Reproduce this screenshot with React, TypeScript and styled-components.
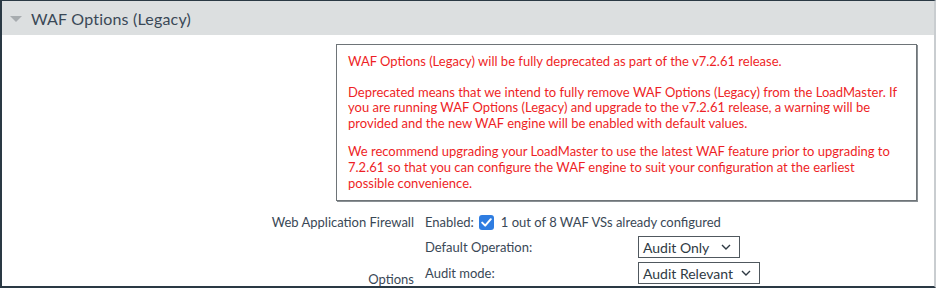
import React from "react";
import styled, { createGlobalStyle } from "styled-components";

const Global = createGlobalStyle`
  html, body { margin: 0; padding: 0; background: #fff; }
  body { font-family: Lato, "Noto Sans", sans-serif; }
`;

const Frame = styled.div`
  box-sizing: border-box;
  width: 936px;
  height: 288px;
  overflow: hidden;
  border-top: 1px solid #2a3944;
  border-left: 2px solid #2a3944;
  border-bottom: 2px solid #2a3944;
  border-right: 2px solid #c9cdd0;
  display: flex;
  flex-direction: column;
`;

const Header = styled.div`
  height: 34px;
  background: #dcdfe0;
  display: flex;
  align-items: center;
  gap: 9px;
  padding-left: 8px;
  flex-shrink: 0;
`;

const Caret = styled.span`
  width: 0;
  height: 0;
  border-left: 6px solid transparent;
  border-right: 6px solid transparent;
  border-top: 6px solid #a7acaf;
  margin-top: 2px;
`;

const Title = styled.span`
  font-size: 16px;
  color: #3a4856;
  letter-spacing: 0.2px;
`;

const Body = styled.div`
  padding-top: 9px;
  display: flex;
  flex-direction: column;
`;

const Notice = styled.div`
  box-sizing: border-box;
  margin-left: 334px;
  width: 581px;
  height: 157px;
  border: 1px solid #6e7478;
  box-shadow: 1px 1px 0 #8a9094;
  padding: 9px 11px;
  color: #ee1f26;
  font-size: 13px;
  line-height: 15.6px;
`;

const Para = styled.div<{ $gap?: number }>`
  margin-top: ${(p) => p.$gap ?? 0}px;
`;

const Line = styled.div`
  white-space: nowrap;
`;

const Form = styled.div`
  display: grid;
  grid-template-columns: 412px 1fr;
  column-gap: 11px;
  margin-top: 11px;
  font-size: 13px;
  color: #3a4856;
`;

const Label = styled.div<{ $bottom?: boolean }>`
  text-align: right;
  display: flex;
  justify-content: flex-end;
  align-items: ${(p) => (p.$bottom ? "flex-end" : "center")};
  line-height: 16px;
  margin-bottom: ${(p) => (p.$bottom ? "-3px" : "0")};
`;

const Field = styled.div`
  display: flex;
  align-items: center;
  gap: 5px;
  height: 20px;
`;

const Check = styled.span`
  width: 15px;
  height: 15px;
  border-radius: 3px;
  background: #2f7de1;
  display: inline-flex;
  align-items: center;
  justify-content: center;
  margin-right: 2px;
`;

const Options = styled.div`
  display: grid;
  grid-template-columns: 213px auto;
  row-gap: 4px;
  margin-top: 4px;
  justify-content: start;
  align-items: center;
`;

const Select = styled.div<{ $gap: number }>`
  box-sizing: border-box;
  height: 22px;
  border: 1px solid #50585e;
  display: inline-flex;
  align-items: center;
  justify-self: start;
  padding: 0 8px 0 4px;
  gap: ${(p) => p.$gap}px;
  font-size: 14px;
  color: #2f3a44;
`;

const Chevron = () => (
  <svg width="10" height="6" viewBox="0 0 10 6">
    <path d="M1 1l4 4 4-4" fill="none" stroke="#2f3a44" strokeWidth="1.4" />
  </svg>
);

export default function App() {
  return (
    <>
      <Global />
      <Frame>
        <Header>
          <Caret />
          <Title>WAF Options (Legacy)</Title>
        </Header>
        <Body>
          <Notice>
            <Para>
              <Line>WAF Options (Legacy) will be fully deprecated as part of the v7.2.61 release.</Line>
            </Para>
            <Para $gap={15}>
              <Line>Deprecated means that we intend to fully remove WAF Options (Legacy) from the LoadMaster. If</Line>
              <Line>you are running WAF Options (Legacy) and upgrade to the v7.2.61 release, a warning will be</Line>
              <Line>provided and the new WAF engine will be enabled with default values.</Line>
            </Para>
            <Para $gap={13}>
              <Line>We recommend upgrading your LoadMaster to use the latest WAF feature prior to upgrading to</Line>
              <Line>7.2.61 so that you can configure the WAF engine to suit your configuration at the earliest</Line>
              <Line>possible convenience.</Line>
            </Para>
          </Notice>
          <Form>
            <Label>Web Application Firewall</Label>
            <Field>
              <span>Enabled:</span>
              <Check>
                <svg width="11" height="9" viewBox="0 0 11 9">
                  <path d="M1.2 4.6l3 3 5.6-6.4" fill="none" stroke="#fff" strokeWidth="2" strokeLinecap="round" strokeLinejoin="round" />
                </svg>
              </Check>
              <span>1 out of 8 WAF VSs already configured</span>
            </Field>
            <Label $bottom>Options</Label>
            <Options>
              <span>Default Operation:</span>
              <Select $gap={12}>
                Audit Only
                <Chevron />
              </Select>
              <span>Audit mode:</span>
              <Select $gap={8}>
                Audit Relevant
                <Chevron />
              </Select>
            </Options>
          </Form>
        </Body>
      </Frame>
    </>
  );
}
